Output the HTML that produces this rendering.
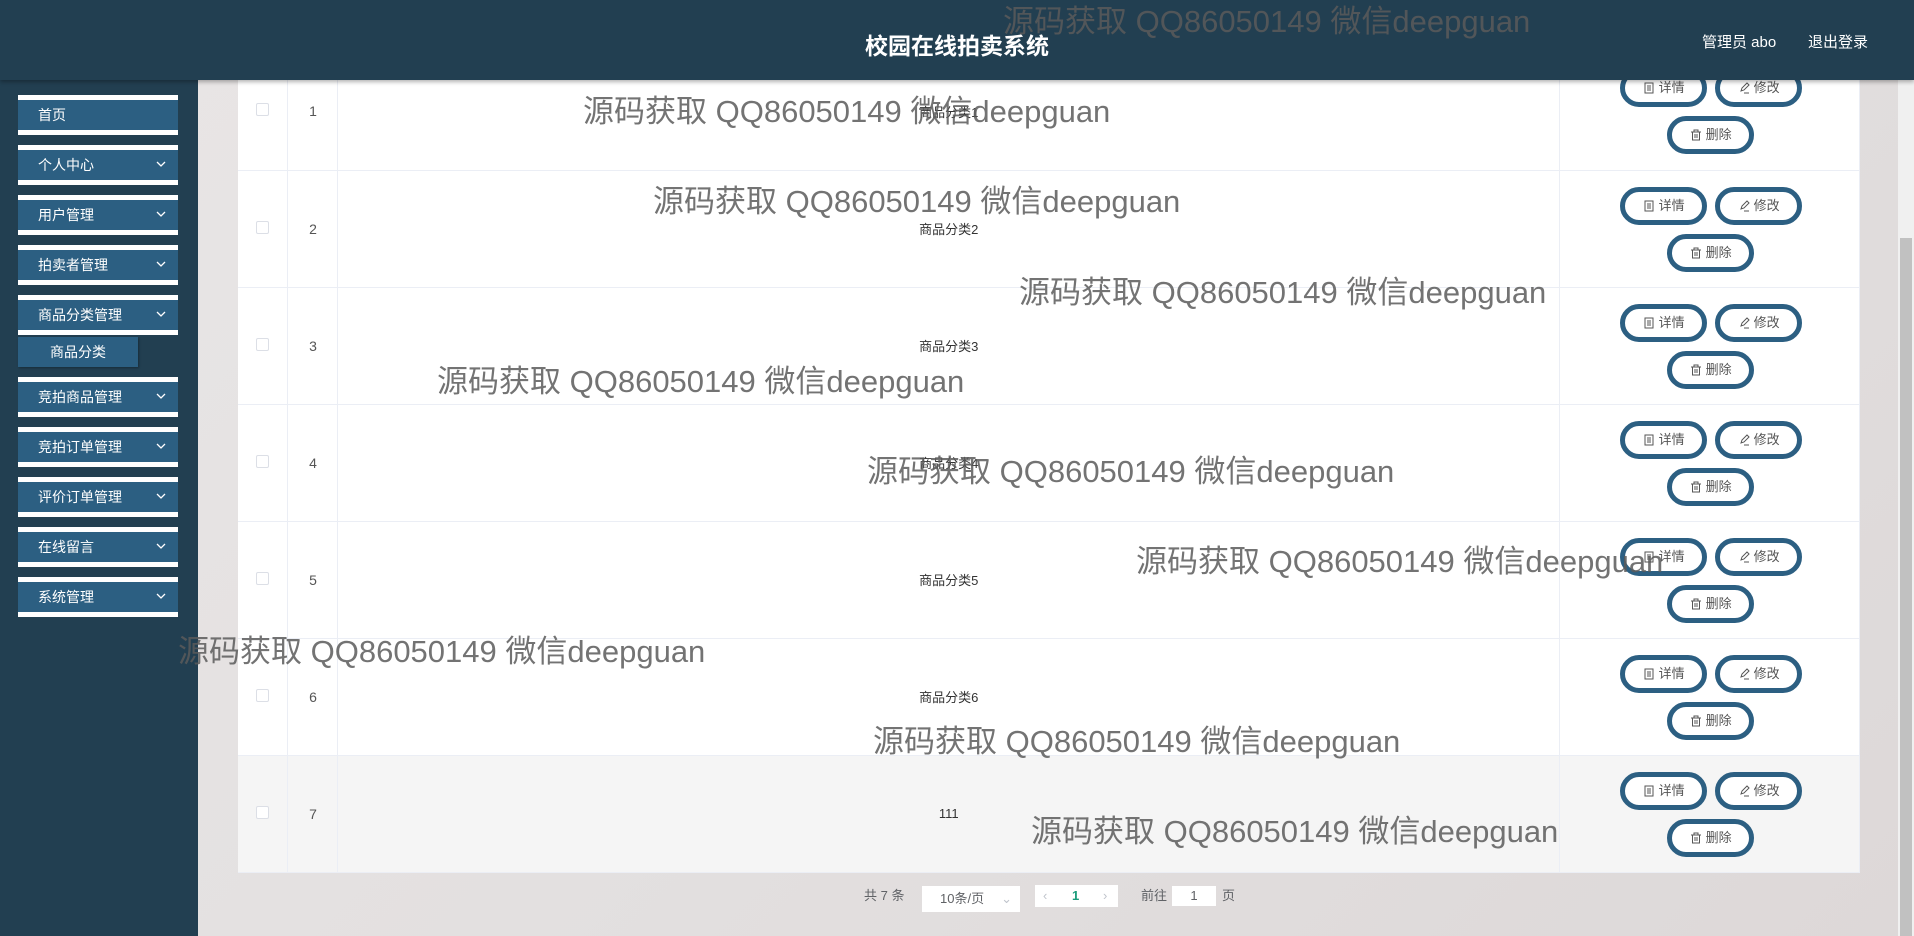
<!DOCTYPE html>
<html><head><meta charset="utf-8"><style>
*{margin:0;padding:0;box-sizing:border-box}
body{width:1914px;height:936px;overflow:hidden;position:relative;font-family:"Liberation Sans","Noto Sans CJK SC",sans-serif;background:linear-gradient(135deg,#e9e6e6,#e3e0e0 50%,#ddd8d8);}
.hdr{position:absolute;left:0;top:0;width:1914px;height:80px;background:#223f51;box-shadow:0 2px 4px rgba(0,0,0,.3);z-index:5}
.hdr .t{position:absolute;left:0;width:1914px;text-align:center;top:27px;color:#fff;font-size:23px;font-weight:bold}
.hdr .r{position:absolute;top:31px;color:#fff;font-size:15px}
.side{position:absolute;left:0;top:80px;width:198px;height:856px;background:#223f51}
.mi{position:absolute;left:18px;width:160px;height:40px;background:#2c5f82;border-top:5px solid #fff;border-bottom:5px solid #fff;color:#fff;font-size:14px;line-height:30px;padding-left:20px}
.mi svg{position:absolute;right:12px;top:11px}
.sub{position:absolute;left:18px;top:337px;width:120px;height:30px;background:#2c5f82;color:#fff;font-size:14px;line-height:30px;text-align:center;box-shadow:1px 1px 2px rgba(0,0,0,.3)}
table{position:absolute;left:238px;top:53px;width:1622px;border-collapse:collapse;background:#fff}
td{height:117px;border-bottom:1px solid #ebeef5;border-right:1px solid #ebeef5;text-align:center;font-size:13px;color:#333;vertical-align:middle;position:relative}
tr.h td{background:#f5f5f5}
.cb{display:inline-block;width:13px;height:13px;border:1px solid #dcdfe6;border-radius:2px;background:#fff}
.num{color:#555;font-size:14px}
.b{position:absolute;height:38px;width:87px;border:5px solid #2c5f82;border-radius:20px;background:#fff;font-size:13px;color:#555;line-height:28px;text-align:center}
.b svg{vertical-align:-2px;margin-right:4px}
.wm{position:absolute;font-size:31px;color:rgba(90,90,90,.85);white-space:nowrap;z-index:6;line-height:1}
.sb{position:absolute;right:0;top:80px;width:16px;height:856px;background:#f0f0f0}
.sb div{position:absolute;left:2px;top:158px;width:12px;height:698px;background:#c1c1c1}
.pg{position:absolute;top:885px;font-size:13px;color:#606266}
</style></head><body>
<svg width="0" height="0" style="position:absolute"><defs>
<symbol id="d" viewBox="0 0 12 12"><rect x="2" y="1" width="8" height="10" fill="none" stroke="#555"/><path d="M4 4h4M4 6h4M4 8h4" stroke="#555"/></symbol>
<symbol id="e" viewBox="0 0 12 12"><path d="M3 9l1-3 5-5 2 2-5 5zM6 11h5" fill="none" stroke="#555"/></symbol>
<symbol id="t" viewBox="0 0 12 12"><path d="M1 3h10M4 3V1h4v2M2.5 3v8h7V3M5 5v4M7 5v4" fill="none" stroke="#555"/></symbol>
</defs></svg>
<div class="hdr"><div class="t">校园在线拍卖系统</div><div class="r" style="left:1702px">管理员 abo</div><div class="r" style="left:1808px">退出登录</div></div>
<div class="side">
<div class="mi" style="top:15px">首页</div>
<div class="mi" style="top:65px">个人中心<svg width="10" height="7"><path d="M1 1l4 4 4-4" stroke="#fff" fill="none" stroke-width="1.3"/></svg></div>
<div class="mi" style="top:115px">用户管理<svg width="10" height="7"><path d="M1 1l4 4 4-4" stroke="#fff" fill="none" stroke-width="1.3"/></svg></div>
<div class="mi" style="top:165px">拍卖者管理<svg width="10" height="7"><path d="M1 1l4 4 4-4" stroke="#fff" fill="none" stroke-width="1.3"/></svg></div>
<div class="mi" style="top:215px">商品分类管理<svg width="10" height="7"><path d="M1 1l4 4 4-4" stroke="#fff" fill="none" stroke-width="1.3"/></svg></div>
<div class="sub" style="top:257px">商品分类</div>
<div class="mi" style="top:297px">竞拍商品管理<svg width="10" height="7"><path d="M1 1l4 4 4-4" stroke="#fff" fill="none" stroke-width="1.3"/></svg></div>
<div class="mi" style="top:347px">竞拍订单管理<svg width="10" height="7"><path d="M1 1l4 4 4-4" stroke="#fff" fill="none" stroke-width="1.3"/></svg></div>
<div class="mi" style="top:397px">评价订单管理<svg width="10" height="7"><path d="M1 1l4 4 4-4" stroke="#fff" fill="none" stroke-width="1.3"/></svg></div>
<div class="mi" style="top:447px">在线留言<svg width="10" height="7"><path d="M1 1l4 4 4-4" stroke="#fff" fill="none" stroke-width="1.3"/></svg></div>
<div class="mi" style="top:497px">系统管理<svg width="10" height="7"><path d="M1 1l4 4 4-4" stroke="#fff" fill="none" stroke-width="1.3"/></svg></div>
</div>
<table>
<colgroup><col style="width:50px"><col style="width:50px"><col style="width:1222px"><col style="width:300px"></colgroup>
<tr><td><span class="cb"></span></td><td class="num">1</td><td>商品分类1</td><td><div class="b" style="left:60px;top:16px"><svg width="12" height="12"><use href="#d"/></svg>详情</div><div class="b" style="left:155px;top:16px"><svg width="12" height="12"><use href="#e"/></svg>修改</div><div class="b" style="left:107px;top:63px"><svg width="12" height="12"><use href="#t"/></svg>删除</div></td></tr>
<tr><td><span class="cb"></span></td><td class="num">2</td><td>商品分类2</td><td><div class="b" style="left:60px;top:16px"><svg width="12" height="12"><use href="#d"/></svg>详情</div><div class="b" style="left:155px;top:16px"><svg width="12" height="12"><use href="#e"/></svg>修改</div><div class="b" style="left:107px;top:63px"><svg width="12" height="12"><use href="#t"/></svg>删除</div></td></tr>
<tr><td><span class="cb"></span></td><td class="num">3</td><td>商品分类3</td><td><div class="b" style="left:60px;top:16px"><svg width="12" height="12"><use href="#d"/></svg>详情</div><div class="b" style="left:155px;top:16px"><svg width="12" height="12"><use href="#e"/></svg>修改</div><div class="b" style="left:107px;top:63px"><svg width="12" height="12"><use href="#t"/></svg>删除</div></td></tr>
<tr><td><span class="cb"></span></td><td class="num">4</td><td>商品分类4</td><td><div class="b" style="left:60px;top:16px"><svg width="12" height="12"><use href="#d"/></svg>详情</div><div class="b" style="left:155px;top:16px"><svg width="12" height="12"><use href="#e"/></svg>修改</div><div class="b" style="left:107px;top:63px"><svg width="12" height="12"><use href="#t"/></svg>删除</div></td></tr>
<tr><td><span class="cb"></span></td><td class="num">5</td><td>商品分类5</td><td><div class="b" style="left:60px;top:16px"><svg width="12" height="12"><use href="#d"/></svg>详情</div><div class="b" style="left:155px;top:16px"><svg width="12" height="12"><use href="#e"/></svg>修改</div><div class="b" style="left:107px;top:63px"><svg width="12" height="12"><use href="#t"/></svg>删除</div></td></tr>
<tr><td><span class="cb"></span></td><td class="num">6</td><td>商品分类6</td><td><div class="b" style="left:60px;top:16px"><svg width="12" height="12"><use href="#d"/></svg>详情</div><div class="b" style="left:155px;top:16px"><svg width="12" height="12"><use href="#e"/></svg>修改</div><div class="b" style="left:107px;top:63px"><svg width="12" height="12"><use href="#t"/></svg>删除</div></td></tr>
<tr class="h"><td><span class="cb"></span></td><td class="num">7</td><td>111</td><td><div class="b" style="left:60px;top:16px"><svg width="12" height="12"><use href="#d"/></svg>详情</div><div class="b" style="left:155px;top:16px"><svg width="12" height="12"><use href="#e"/></svg>修改</div><div class="b" style="left:107px;top:63px"><svg width="12" height="12"><use href="#t"/></svg>删除</div></td></tr>
</table>
<div class="pg" style="left:864px">共 7 条</div>
<div style="position:absolute;left:922px;top:886px;width:98px;height:26px;background:#fff;font-size:13px;color:#606266;line-height:26px;padding-left:18px">10条/页<span style="position:absolute;right:8px;color:#c0c4cc">⌄</span></div>
<div style="position:absolute;left:1035px;top:885px;width:83px;height:22px;background:#fff;font-size:13px;line-height:22px;color:#c0c4cc"><span style="position:absolute;left:8px">‹</span><span style="position:absolute;left:37px;color:#1a9c7a;font-weight:bold">1</span><span style="position:absolute;left:68px">›</span></div>
<div class="pg" style="left:1141px">前往</div>
<div style="position:absolute;left:1172px;top:886px;width:44px;height:20px;background:#fff;font-size:13px;color:#606266;text-align:center;line-height:20px">1</div>
<div class="pg" style="left:1222px">页</div>
<div class="sb"><div></div></div>
<div class="wm" style="left:1003px;top:6px">源码获取 QQ86050149 微信deepguan</div>
<div class="wm" style="left:583px;top:96px">源码获取 QQ86050149 微信deepguan</div>
<div class="wm" style="left:653px;top:186px">源码获取 QQ86050149 微信deepguan</div>
<div class="wm" style="left:1019px;top:277px">源码获取 QQ86050149 微信deepguan</div>
<div class="wm" style="left:437px;top:366px">源码获取 QQ86050149 微信deepguan</div>
<div class="wm" style="left:867px;top:456px">源码获取 QQ86050149 微信deepguan</div>
<div class="wm" style="left:1136px;top:546px">源码获取 QQ86050149 微信deepguan</div>
<div class="wm" style="left:178px;top:636px">源码获取 QQ86050149 微信deepguan</div>
<div class="wm" style="left:873px;top:726px">源码获取 QQ86050149 微信deepguan</div>
<div class="wm" style="left:1031px;top:816px">源码获取 QQ86050149 微信deepguan</div>
</body></html>
